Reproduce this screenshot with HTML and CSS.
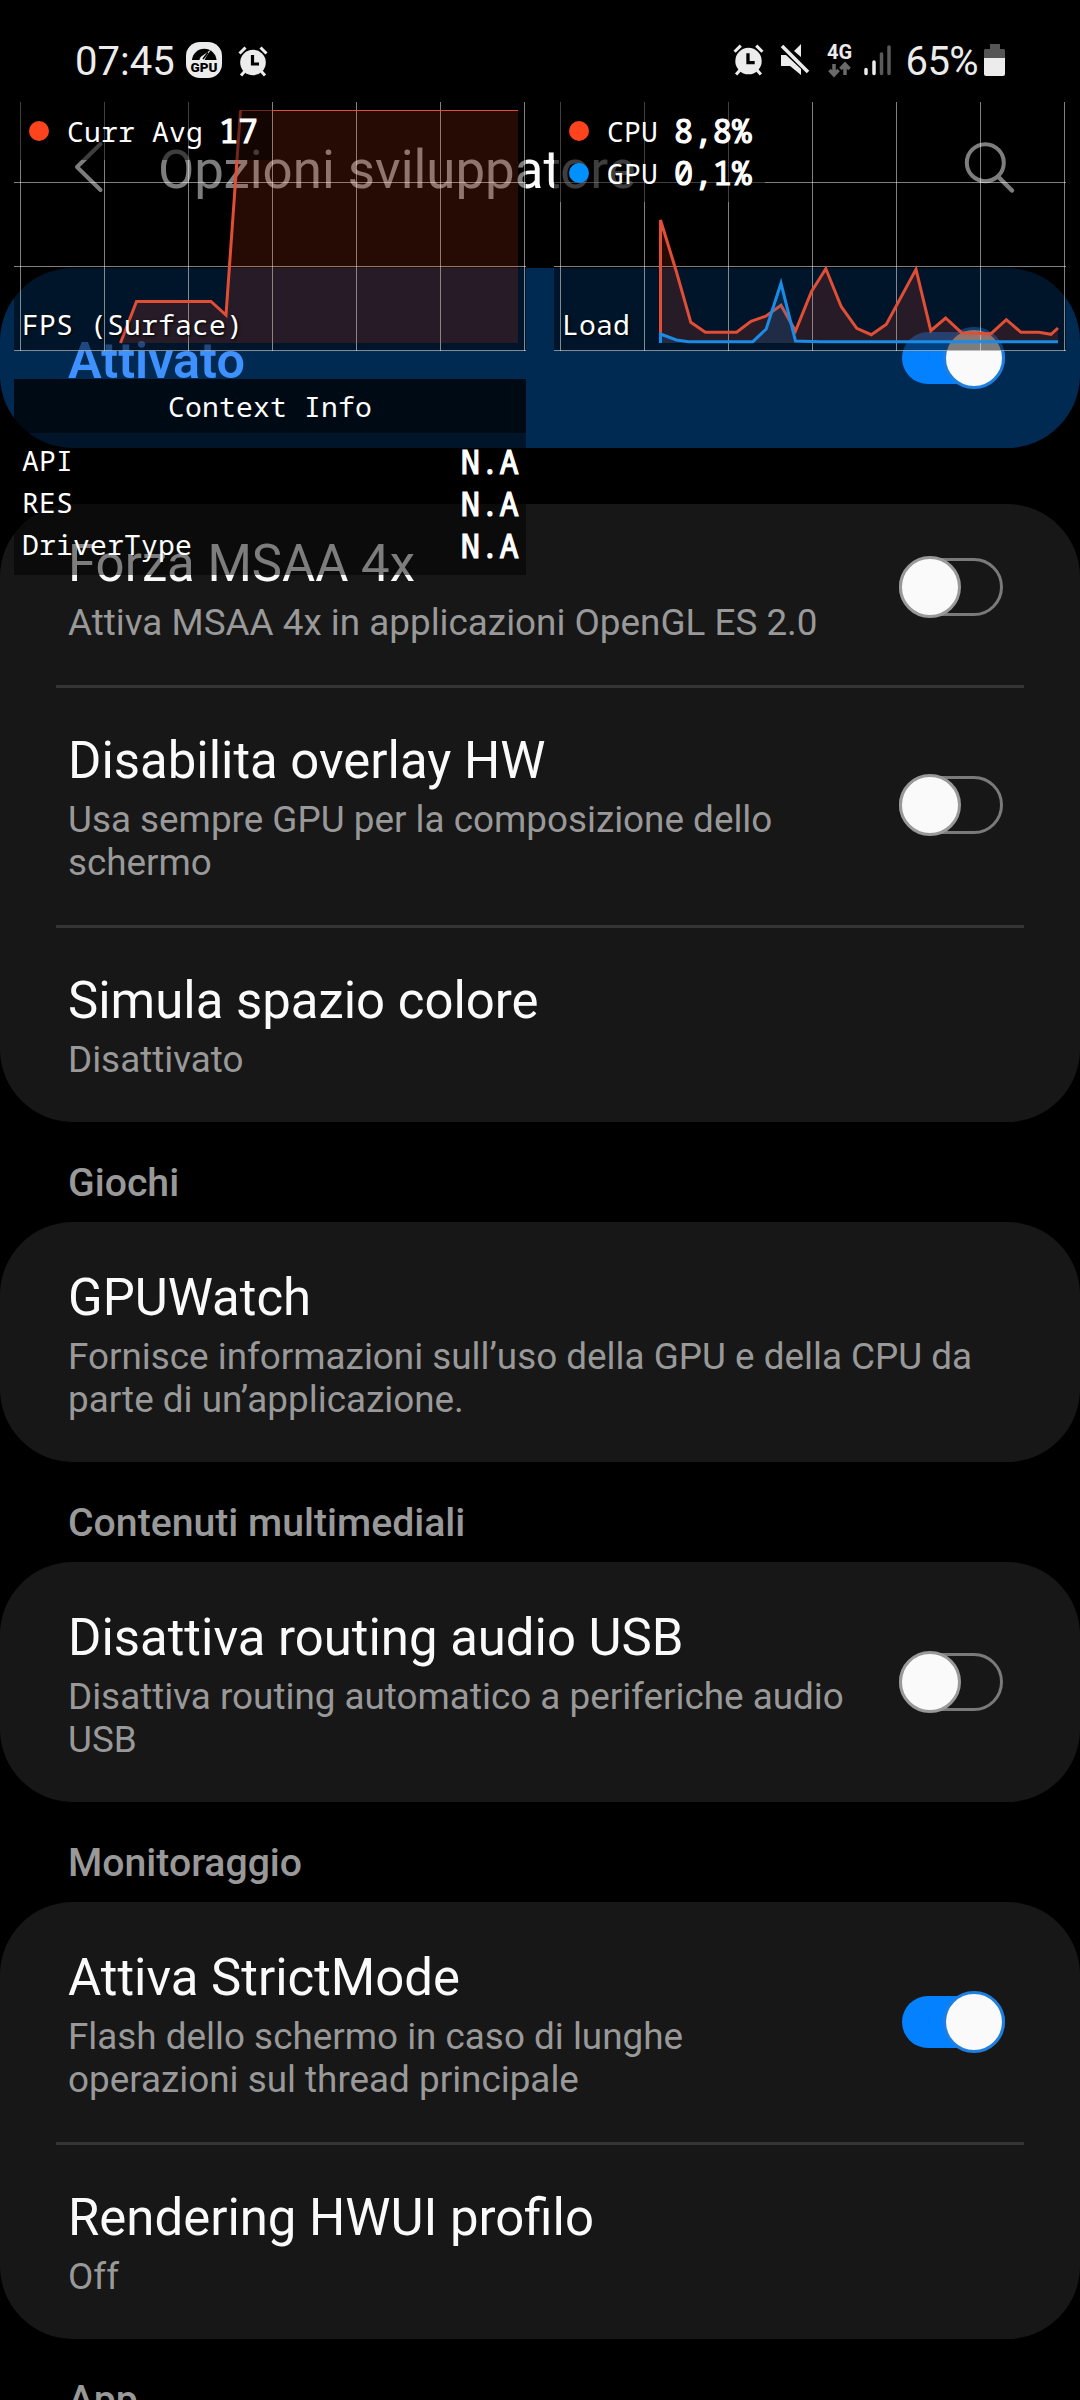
FILE: index.html
```html
<!DOCTYPE html>
<html lang="it">
<head>
    <meta charset="UTF-8">
    <meta name="viewport" content="width=device-width, initial-scale=1.0">
    <title>Opzioni sviluppatore</title>
    <link rel="stylesheet" href="styles.css">
</head>
<body>
    <!-- Status Bar -->
    <div class="status-bar">
        <div class="status-left">
            <span class="clock">07:45</span>
            <svg class="icon-gpu" width="36" height="36" viewBox="0 0 36 36">
                <rect width="36" height="36" rx="14" fill="#ececec"/>
                <path d="M6 18a12.300 12.300 0 0 1 24.500 0z" fill="#000"/>
                <path d="M13.500 18c0-2 1.500-4 4-5l7.500-5.500L20 15l-1.500 3z" fill="#ececec"/>
                <path d="M17 17l5-6.500" stroke="#000" stroke-width="1.500"/>
                <text class="gpu-label" x="18" y="30" text-anchor="middle">GPU</text>
            </svg>
            <svg class="icon-alarm" width="30" height="31" viewBox="0 0 30 31">
                <use href="#alarm"/>
            </svg>
        </div>
        <div class="status-right">
            <svg width="33" height="32" viewBox="0 0 30 31">
                <g id="alarm">
                    <circle cx="15" cy="16.500" r="12.800" fill="#ececec"/>
                    <path d="M1.500 7.500l6-6M28.500 7.500l-6-6M7 25l-4 4.500M23 25l4 4.500" stroke="#ececec" stroke-width="3" fill="none"/>
                    <path d="M14.500 9v9h6.500" stroke="#000" stroke-width="3.200" fill="none"/>
                </g>
            </svg>
            <svg class="icon-mute" width="30" height="32" viewBox="0 0 30 32">
                <path d="M1 11h5l15 14v6L10 22H1zM14 7l7-7v13z" fill="#ececec"/>
                <path d="M2 2l26 26" stroke="#ececec" stroke-width="3.500"/>
            </svg>
            <svg class="icon-4g" width="26" height="34" viewBox="0 0 26 34">
                <text class="net-label" x="12.500" y="16" text-anchor="middle">4G</text>
                <path d="M7 21v10M2.500 27l4.500 5 4.500-5M18 32V22M13.500 26l4.500-5 4.500 5" stroke="#6a6a6a" stroke-width="3.500" fill="none"/>
            </svg>
            <svg class="icon-signal" width="28" height="32" viewBox="0 0 28 32">
                <path d="M2 25.500v4M10 18v11.500" stroke="#ececec" stroke-width="3.500" stroke-linecap="round"/>
                <path d="M17.500 10v19.500M25 3v26.500" stroke="#5a5a5a" stroke-width="3.500" stroke-linecap="round"/>
            </svg>
            <span class="battery-level">65%</span>
            <svg class="icon-battery" width="22" height="32" viewBox="0 0 22 32">
                <path d="M6 0h10v5h4a2 2 0 0 1 1 2v7H0V7a2 2 0 0 1 1-2h5z" fill="#555"/>
                <path d="M0 14h21v16a2 2 0 0 1-2 2H2a2 2 0 0 1-2-2z" fill="#ececec"/>
            </svg>
        </div>
    </div>

    <!-- App Bar -->
    <div class="app-bar">
        <svg class="back" width="30" height="52" viewBox="0 0 30 52">
            <path d="M26.500 3L3 26l23.500 23" fill="none" stroke="#fafafa" stroke-width="4" stroke-linecap="round" stroke-linejoin="round"/>
        </svg>
        <div class="app-title">Opzioni sviluppatore</div>
        <svg class="search" width="52" height="52" viewBox="0 0 52 52">
            <circle cx="21.300" cy="21.700" r="18.500" fill="none" stroke="#fafafa" stroke-width="4"/>
            <path d="M34.500 36l13.500 13.500" stroke="#fafafa" stroke-width="4.500" stroke-linecap="round"/>
        </svg>
    </div>

    <!-- Master switch -->
    <div class="card master">
        <div class="master-title">Attivato</div>
        <div class="switch on"><div class="thumb"></div></div>
    </div>

    <div class="card scrolled">
        <div class="row">
            <div class="text">
                <div class="title">Forza MSAA 4x</div>
                <div class="desc">Attiva MSAA 4x in applicazioni OpenGL ES 2.0</div>
            </div>
            <div class="switch"><div class="thumb"></div></div>
        </div>
        <div class="row">
            <div class="text">
                <div class="title">Disabilita overlay HW</div>
                <div class="desc">Usa sempre GPU per la composizione dello<br>schermo</div>
            </div>
            <div class="switch"><div class="thumb"></div></div>
        </div>
        <div class="row">
            <div class="text">
                <div class="title">Simula spazio colore</div>
                <div class="desc">Disattivato</div>
            </div>
        </div>
    </div>

    <div class="section">Giochi</div>
    <div class="card">
        <div class="row">
            <div class="text">
                <div class="title">GPUWatch</div>
                <div class="desc">Fornisce informazioni sull’uso della GPU e della CPU da<br>parte di un’applicazione.</div>
            </div>
        </div>
    </div>

    <div class="section">Contenuti multimediali</div>
    <div class="card">
        <div class="row">
            <div class="text">
                <div class="title">Disattiva routing audio USB</div>
                <div class="desc">Disattiva routing automatico a periferiche audio<br>USB</div>
            </div>
            <div class="switch"><div class="thumb"></div></div>
        </div>
    </div>

    <div class="section">Monitoraggio</div>
    <div class="card">
        <div class="row">
            <div class="text">
                <div class="title">Attiva StrictMode</div>
                <div class="desc">Flash dello schermo in caso di lunghe<br>operazioni sul thread principale</div>
            </div>
            <div class="switch on"><div class="thumb"></div></div>
        </div>
        <div class="row">
            <div class="text">
                <div class="title">Rendering HWUI profilo</div>
                <div class="desc">Off</div>
            </div>
        </div>
    </div>

    <div class="section">App</div>

    <!-- GPUWatch overlay: fps -->
    <div class="panel fps">
        <svg class="graph" width="512" height="249" viewBox="14 102 512 249">
            <path class="grid" d="M20.500 102v249M104.500 102v249M188.500 102v249M272.500 102v249M356.500 102v249M440.500 102v249M524.500 102v249M14 182.500h512M14 266.500h512M14 350.500h512"/>
            <path class="fill-red" d="M120.500 343L136.500 301.500H211L226 316L240.500 110.500H518V343z"/>
            <path class="line-red" d="M120.500 343L136.500 301.500H211L226 315L240.500 110.500"/>
            <path class="line-red thin" d="M240 110.500H518"/>
        </svg>
        <div class="legend">
            <div class="legend-row"><i class="dot red"></i><span>Curr Avg</span><b>17</b></div>
        </div>
        <div class="graph-name">FPS (Surface)</div>
    </div>

    <!-- GPUWatch overlay: load -->
    <div class="panel load">
        <svg class="graph" width="512" height="249" viewBox="554 102 512 249">
            <path class="grid" d="M560.500 102v249M644.500 102v249M728.500 102v249M812.500 102v249M896.500 102v249M980.500 102v249M1064.500 102v249M554 182.500h512M554 266.500h512M554 350.500h512"/>
            <path class="fill-red" d="M660.500 343V220L676.400 271.700L690.800 322.300L705.300 332.300H736.600L751 321.300L766.200 316L781 305.300L795.500 331L811.400 291.700L825.800 268.700L841.300 306.700L856.800 328.300L871.300 334.700L886.400 324.300L916 269.300L930.800 330.700L945.600 318L961.500 332.700L991 333.700L1006.300 319.700L1021 332.300H1039L1051 334.300L1058 328V343z"/>
            <path class="line-red" d="M660.500 343V220L676.400 271.700L690.800 322.300L705.300 332.300H736.600L751 321.300L766.200 316L781 305.300L795.500 331L811.400 291.700L825.800 268.700L841.300 306.700L856.800 328.300L871.300 334.700L886.400 324.300L916 269.300L930.800 330.700L945.600 318L961.500 332.700L991 333.700L1006.300 319.700L1021 332.300H1039L1051 334.300L1058 328"/>
            <path class="fill-blue" d="M660.500 343V334L676.400 340L688.800 341.700H752.800L766.200 329L781 283.300L795.500 341L1058 341.700V343z"/>
            <path class="line-blue" d="M660.500 343V334L676.400 340L688.800 341.700H746L752.800 341.700L766.200 329L781 283.300L795.500 341L820 341.700H1058"/>
        </svg>
        <div class="legend">
            <div class="legend-row"><i class="dot red"></i><span>CPU</span><b>8,8%</b></div>
            <div class="legend-row"><i class="dot blue"></i><span>GPU</span><b>0,1%</b></div>
        </div>
        <div class="graph-name">Load</div>
    </div>

    <!-- GPUWatch overlay: context -->
    <div class="panel context">
        <div class="context-title">Context Info</div>
        <div class="context-row"><span>API</span><b>N.A</b></div>
        <div class="context-row"><span>RES</span><b>N.A</b></div>
        <div class="context-row"><span>DriverType</span><b>N.A</b></div>
    </div>
</body>
</html>
```
FILE: styles.css
```css
* {
    box-sizing: border-box;
}

body {
    margin: 0;
    width: 1080px;
    height: 2400px;
    overflow: hidden;
    position: relative;
    background-color: #000;
    color: #fafafa;
    font-family: Roboto, "Liberation Sans", sans-serif;
}

svg {
    display: block;
    flex: none;
    overflow: visible;
}

/* Status bar */
.status-bar {
    height: 102px;
    padding: 18px 74px 0 75px;
    display: flex;
    justify-content: space-between;
    font-size: 40px;
    line-height: 84px;
    color: #ececec;
}

.status-left,
.status-right {
    display: flex;
    align-items: center;
    height: 84px;
}

.clock {
    width: 111px;
    padding-top: 4px;
}

.icon-alarm {
    margin-left: 16px;
    margin-top: 2px;
}

.gpu-label {
    font-size: 13.500px;
    font-weight: 900;
}

.net-label {
    font-size: 20px;
    font-weight: 700;
    fill: #ececec;
}

.icon-mute {
    margin-left: 15px;
}

.icon-4g {
    margin-left: 17px;
}

.icon-signal {
    margin-left: 11px;
}

.battery-level {
    margin-left: 14px;
    padding-top: 4px;
    letter-spacing: -0.6px;
}

.icon-battery {
    margin-left: 6px;
}

/* App bar */
.app-bar {
    height: 166px;
    padding: 39px 64px 0 74px;
    display: flex;
    align-items: flex-start;
}

.app-title {
    margin-left: 54px;
    flex: 1;
    font-size: 52.800px;
    line-height: 58px;
    white-space: nowrap;
}

/* Cards */
.card {
    background-color: #171717;
    border-radius: 73px;
    overflow: hidden;
}

.master {
    height: 180px;
    margin-bottom: 56px;
    padding: 0 75px 0 68px;
    display: flex;
    align-items: center;
    justify-content: space-between;
    background-color: #002a52;
}

.master-title {
    padding-top: 4px;
    font-size: 50.400px;
    font-weight: 600;
    color: #3e91ff;
}

.row {
    position: relative;
    display: flex;
    align-items: center;
    justify-content: space-between;
    padding: 0 75px 0 68px;
}

.text {
    padding: 46px 0 41px;
}

/* first row is partly under the previous card */
.scrolled .row:first-child {
    margin-top: -16px;
}

.row + .row::before {
    content: "";
    position: absolute;
    top: 0;
    left: 56px;
    right: 56px;
    height: 3px;
    background-color: #353535;
}

.title {
    margin-bottom: 8px;
    font-size: 50.900px;
    line-height: 59px;
    white-space: nowrap;
}

.desc {
    font-size: 36.850px;
    line-height: 43px;
    color: #999;
    white-space: nowrap;
}

.section {
    height: 100px;
    padding: 40px 68px 0;
    font-size: 39.200px;
    font-weight: 500;
    line-height: 43px;
    color: #999;
}

/* Switches */
.switch {
    flex: none;
    width: 104px;
    height: 58px;
    margin-right: 2px;
    border: 3px solid #7a7a7a;
    border-radius: 29px;
    display: flex;
    align-items: center;
}

.thumb {
    flex: none;
    width: 62px;
    height: 62px;
    margin-left: -3px;
    border: 3px solid #999;
    border-radius: 50%;
    background-color: #fafafa;
}

.switch.on {
    width: 103px;
    height: 52px;
    margin-right: 0;
    border: none;
    background-color: #0381fe;
}

.switch.on .thumb {
    margin-left: 41px;
    border-color: #1f7fe0;
}

/* Overlay panels */
.panel {
    position: absolute;
    width: 512px;
    background-color: rgba(0, 0, 0, 0.5);
    color: #fff;
    font-family: "Droid Sans Mono", "Noto Sans Mono", "DejaVu Sans Mono", monospace;
    font-size: 28px;
    letter-spacing: 0.2px;
    line-height: 42px;
}

.panel b {
    font-size: 32px;
    font-weight: normal;
    -webkit-text-stroke: 1.200px #fff;
}

.fps {
    left: 14px;
    top: 102px;
    height: 249px;
}

.load {
    left: 554px;
    top: 102px;
    height: 249px;
}

.graph {
    position: absolute;
    left: 0;
    top: 0;
}

.grid {
    stroke: rgba(255, 255, 255, 0.5);
    stroke-width: 1;
}

.fill-red {
    fill: rgba(255, 67, 28, 0.15);
}

.fill-blue {
    fill: rgba(0, 145, 255, 0.15);
}

.line-red,
.line-blue {
    fill: none;
    stroke-width: 3;
    stroke: #e04e36;
}

.line-red.thin {
    stroke-width: 1;
}

.line-blue {
    stroke: #1a8be6;
}

.legend {
    position: relative;
    width: 258px;
    padding: 8px 0 8px 15px;
    background-color: rgba(0, 0, 0, 0.5);
}

.load .legend {
    width: 211px;
}

.legend-row {
    display: flex;
    align-items: center;
    height: 42px;
}

.legend-row b {
    margin-left: 16px;
}

.dot {
    width: 20px;
    height: 20px;
    margin-right: 18px;
    border-radius: 50%;
}

.dot.red {
    background-color: #ff431c;
}

.dot.blue {
    background-color: #0091ff;
}

.graph-name {
    position: absolute;
    left: 8px;
    bottom: 6px;
    text-shadow: 1px 1px 3px #000;
}

.context {
    left: 14px;
    top: 379px;
    height: 196px;
}

.context-title {
    height: 54px;
    margin-bottom: 7px;
    line-height: 55px;
    text-align: center;
    background-color: rgba(0, 0, 0, 0.5);
}

.context-row {
    display: flex;
    justify-content: space-between;
    height: 42px;
    padding: 0 7px 0 8px;
    line-height: 40px;
}

.context-row b {
    line-height: 44px;
}
```
